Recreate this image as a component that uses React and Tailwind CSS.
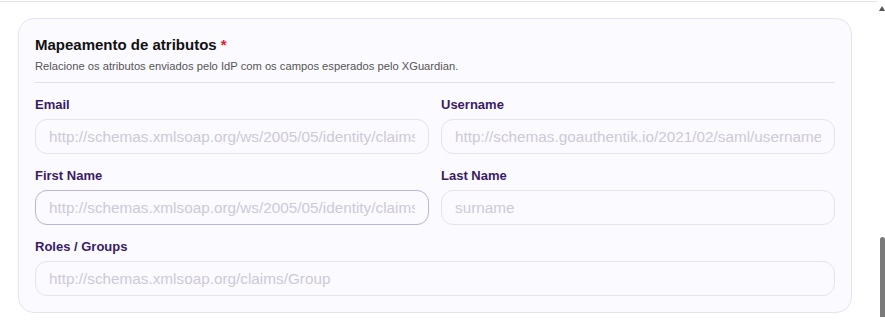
import React from "react";

const font = { fontFamily: '"Liberation Sans", Arial, sans-serif' };

function Field({ label, placeholder, focused }) {
  return (
    <div className="flex flex-col">
      <label className="text-[13px] font-bold leading-[16px] text-[#3a1c63] mb-[6px]">{label}</label>
      <input
        readOnly
        placeholder={placeholder}
        className={
          "h-[35px] w-full rounded-[12px] border bg-[#fbfaff] px-[13px] text-[15.3px] outline-none placeholder:text-[#cdcad6] " +
          (focused ? "border-[#bdb3d6]" : "border-[#e6e2f0]")
        }
        style={font}
      />
    </div>
  );
}

export default function App() {
  return (
    <div className="flex w-[885px] h-[325px] bg-white overflow-hidden" style={font}>
      <div className="w-[877px] flex flex-col">
        <div className="h-[1px] bg-white" />
        <div className="h-[1px] bg-[#e4e4e7]" />
        <div className="pt-[16px] pl-[18px]">
          <div className="w-[834px] rounded-[16px] border border-[#e6e3f0] bg-[#fbfaff] px-[16px] pt-[17px] pb-[16px]">
            <div className="text-[15px] font-bold leading-[18px] text-[#111]">
              Mapeamento de atributos <span className="text-[#e11d2e]">*</span>
            </div>
            <div className="mt-[5px] text-[11.2px] leading-[14px] text-[#555]">
              Relacione os atributos enviados pelo IdP com os campos esperados pelo XGuardian.
            </div>
            <div className="mt-[9px] h-[1px] bg-[#e2dfea]" />
            <div className="mt-[14px] grid grid-cols-2 gap-x-[12px] gap-y-[14px]">
              <Field label="Email" placeholder="http://schemas.xmlsoap.org/ws/2005/05/identity/claims/emailaddress" />
              <Field label="Username" placeholder="http://schemas.goauthentik.io/2021/02/saml/username" />
              <Field label="First Name" placeholder="http://schemas.xmlsoap.org/ws/2005/05/identity/claims/givenname" focused />
              <Field label="Last Name" placeholder="surname" />
              <div className="col-span-2">
                <Field label="Roles / Groups" placeholder="http://schemas.xmlsoap.org/claims/Group" />
              </div>
            </div>
          </div>
        </div>
      </div>
      <div className="w-[8px] flex flex-col items-center">
        <div className="mt-[6px] ml-[2px] w-0 h-0 border-l-[3px] border-r-[3px] border-b-[5px] border-l-transparent border-r-transparent border-b-[#555]" />
        <div className="mt-[226px] ml-[3px] w-[5px] h-[80px] rounded-t-[3px] bg-[#7a7a7a]" />
      </div>
    </div>
  );
}
